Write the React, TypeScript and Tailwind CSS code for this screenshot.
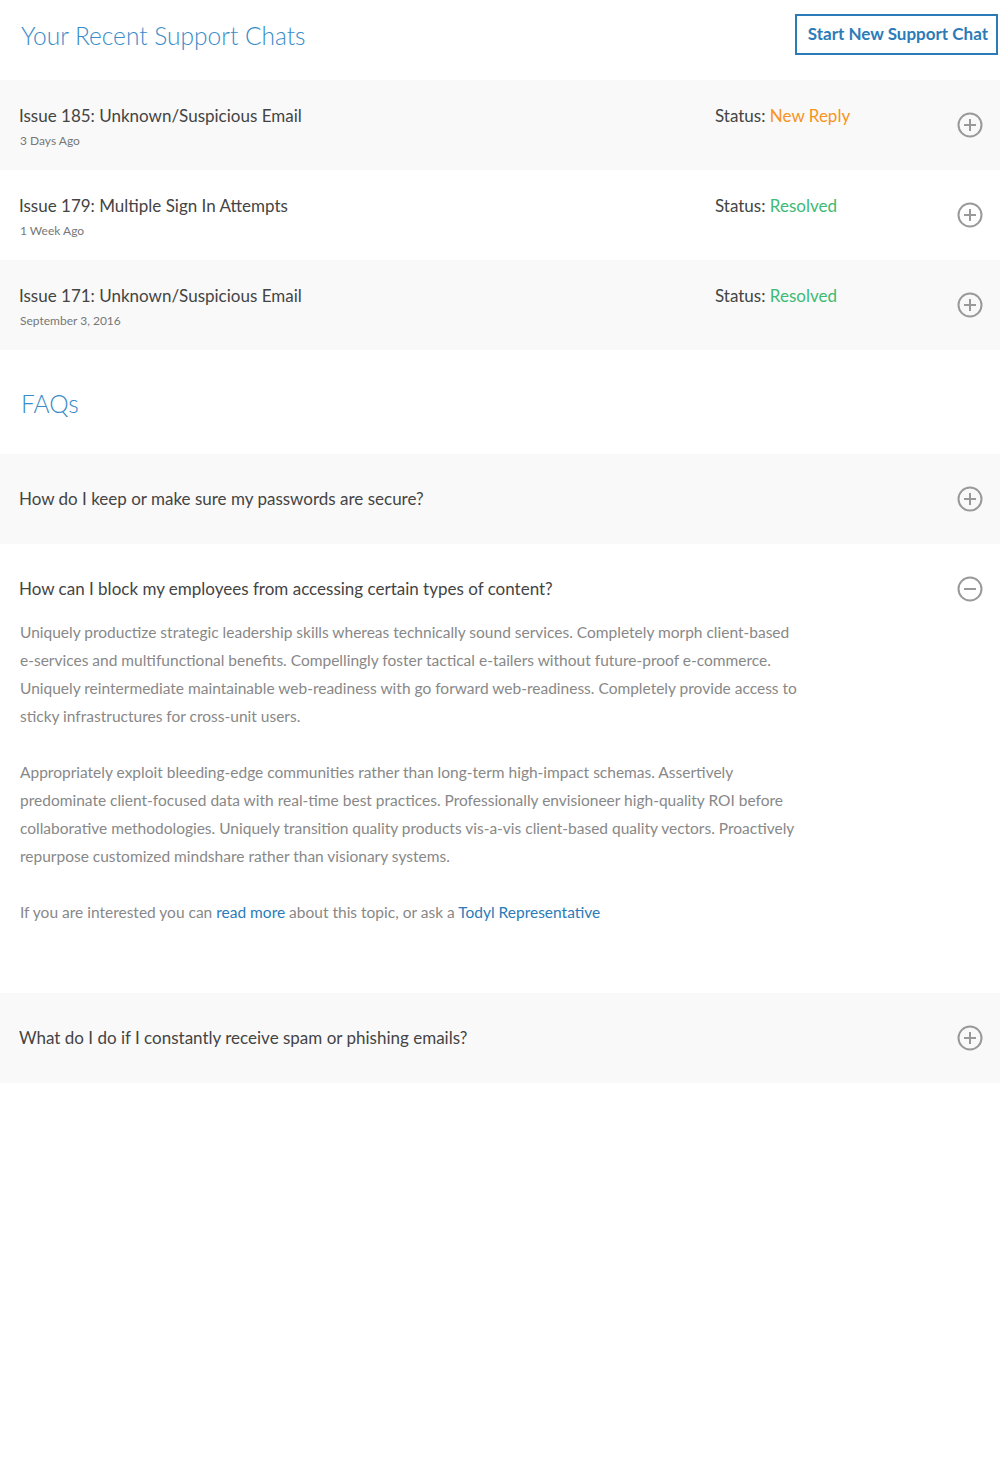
import React, { useState } from 'react'

const font = { fontFamily: 'Lato, "Noto Sans", sans-serif' }

type Chat = {
  title: string
  when: string
  status: string
  tone: 'orange' | 'green'
}

const chats: Chat[] = [
  { title: 'Issue 185: Unknown/Suspicious Email', when: '3 Days Ago', status: 'New Reply', tone: 'orange' },
  { title: 'Issue 179: Multiple Sign In Attempts', when: '1 Week Ago', status: 'Resolved', tone: 'green' },
  { title: 'Issue 171: Unknown/Suspicious Email', when: 'September 3, 2016', status: 'Resolved', tone: 'green' },
]

const faqs = [
  'How do I keep or make sure my passwords are secure?',
  'How can I block my employees from accessing certain types of content?',
  'What do I do if I constantly receive spam or phishing emails?',
]

function ToggleIcon({ open }: { open: boolean }) {
  return (
    <svg width="26" height="26" viewBox="0 0 26 26" fill="none" stroke="#999" strokeWidth="2">
      <circle cx="13" cy="13" r="11.5" />
      <path d="M7 13h12" />
      {!open && <path d="M13 7v12" />}
    </svg>
  )
}

export default function App() {
  const [openFaq, setOpenFaq] = useState(1)

  return (
    <div className="w-[1000px] min-h-[1472px] bg-white" style={font}>
      {/* Recent chats header */}
      <div className="flex h-[80px] items-center justify-between">
        <h1 className="pl-[21px] pb-[8px] text-[24.5px] font-light text-[#3a8cc8]">Your Recent Support Chats</h1>
        <button className="mr-[2px] mb-[12px] h-[41px] border-2 border-[#2b7bb9] pl-[11px] pr-[8px] text-[17px] font-bold text-[#2b7bb9]">
          Start New Support Chat
        </button>
      </div>

      {chats.map((c, i) => (
        <div
          key={c.title}
          className={`flex h-[90px] items-center ${i % 2 === 0 ? 'bg-[#f9f9f9]' : 'bg-white'}`}
        >
          <div className="flex h-full flex-1 pl-[19px] pt-[24px]">
            <div className="w-[696px]">
              <div className="text-[17px] leading-[24px] text-[#444]">{c.title}</div>
              <div className="mt-[5px] pl-[1px] text-[12px] leading-[16px] text-[#777]">{c.when}</div>
            </div>
            <div className="text-[17px] leading-[24px] text-[#444]">
              Status:{' '}
              <span className={c.tone === 'orange' ? 'text-[#f7941d]' : 'text-[#3dba74]'}>{c.status}</span>
            </div>
          </div>
          <div className="pr-[17px]">
            <ToggleIcon open={false} />
          </div>
        </div>
      ))}

      {/* FAQs */}
      <div className="flex h-[104px] items-center pt-[4px]">
        <h2 className="pl-[21px] text-[24.5px] font-light text-[#3a8cc8]">FAQs</h2>
      </div>

      {faqs.map((q, i) => {
        const open = openFaq === i
        return (
          <div key={q} className={open ? 'bg-white' : 'bg-[#f9f9f9]'}>
            <button
              onClick={() => setOpenFaq(open ? -1 : i)}
              className="flex h-[90px] w-full items-center justify-between pl-[19px] pr-[17px] text-left"
            >
              <span className="text-[17px] text-[#444]">{q}</span>
              <ToggleIcon open={open} />
            </button>
            {open && (
              <div className="-mt-[16px] w-[806px] pl-[20px] pb-[67px] text-[15.5px] leading-[28px] text-[#888]">
                <p>
                  Uniquely productize strategic leadership skills whereas technically sound services. Completely morph
                  client-based e-services and multifunctional benefits. Compellingly foster tactical e-tailers without
                  future-proof e-commerce. Uniquely reintermediate maintainable web-readiness with go forward
                  web-readiness. Completely provide access to sticky infrastructures for cross-unit users.
                </p>
                <p className="mt-[28px]">
                  Appropriately exploit bleeding-edge communities rather than long-term high-impact schemas. Assertively
                  predominate client-focused data with real-time best practices. Professionally envisioneer high-quality
                  ROI before collaborative methodologies. Uniquely transition quality products vis-a-vis client-based
                  quality vectors. Proactively repurpose customized mindshare rather than visionary systems.
                </p>
                <p className="mt-[28px]">
                  If you are interested you can <a className="text-[#2b7bb9]">read more</a> about this topic, or ask a{' '}
                  <a className="text-[#2b7bb9]">Todyl Representative</a>
                </p>
              </div>
            )}
          </div>
        )
      })}
    </div>
  )
}
